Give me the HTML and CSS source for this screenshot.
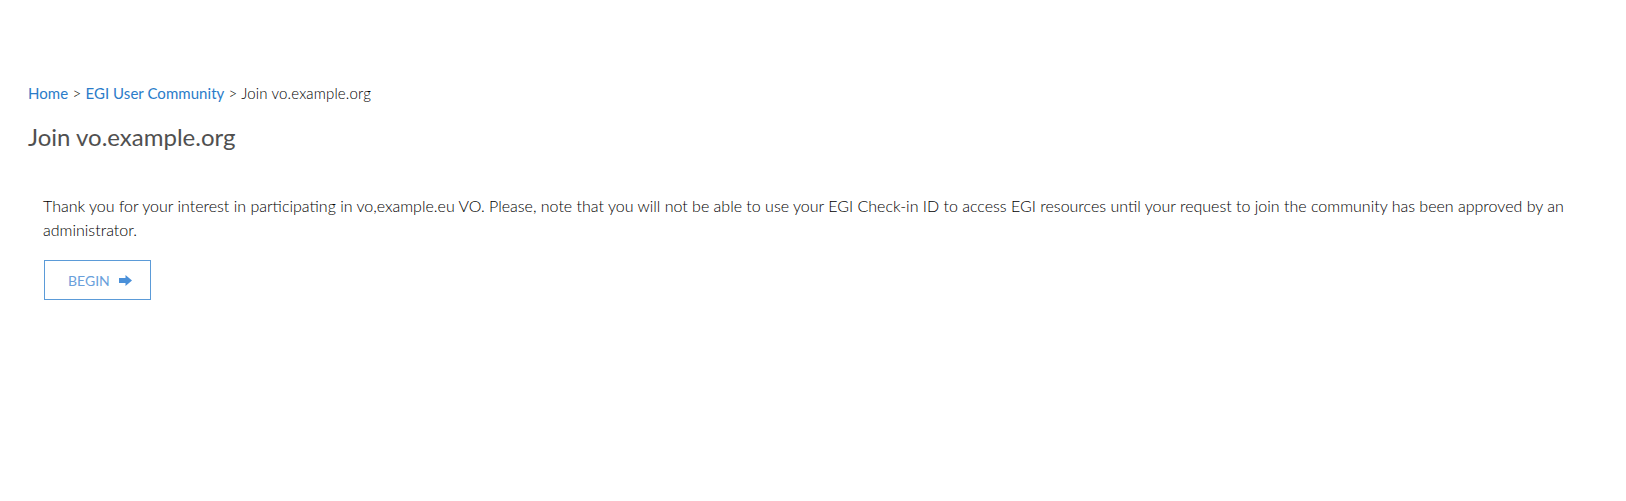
FILE: index.html
```html
<!DOCTYPE html>
<html lang="en">
<head>
<meta charset="utf-8">
<title>Join vo.example.org</title>
<link rel="stylesheet" href="styles.css">
</head>
<body>
<main class="page">
  <nav class="breadcrumb">
    <a href="#">Home</a> &gt; <a href="#">EGI User Community</a> &gt; <span class="current">Join vo.example.org</span>
  </nav>
  <h1 class="title">Join vo.example.org</h1>
  <section class="content">
    <p class="intro">Thank you for your interest in participating in vo,example.eu VO. Please, note that you will not be able to use your EGI Check-in ID to access EGI resources until your request to join the community has been approved by an administrator.</p>
    <button class="begin" type="button">BEGIN <svg class="arrow" width="13" height="11" viewBox="0 0 13 11"><path d="M0 3h6.5V0L13 5.5 6.5 11V8H0z" fill="#4a90d9"/></svg></button>
  </section>
</main>
</body>
</html>
```

FILE: styles.css
```css
html, body {
  margin: 0;
  padding: 0;
  background: #fff;
}
body {
  font-family: Lato, "Open Sans", "Liberation Sans", sans-serif;
  font-size: 16px;
  font-weight: 300;
  color: #111;
}
.page {
  padding: 83px 28px 0 28px;
}
.breadcrumb {
  line-height: 20px;
  color: #000;
  font-size: 15px;
  font-weight: 300;
  letter-spacing: 0.15px;
}
.breadcrumb a {
  color: #2a7cc9;
  font-weight: 400;
  letter-spacing: 0.05px;
  text-decoration: none;
}
.breadcrumb .current {
  color: #000;
}
.title {
  margin: 21px 0 0 0;
  font-size: 24px;
  font-weight: 400;
  line-height: 26px;
  color: #505050;
}
.content {
  padding: 44px 16px 0 15px;
}
.intro {
  margin: 0;
  font-size: 16px;
  line-height: 24px;
  color: #000;
}
.begin {
  margin-top: 18px;
  margin-left: 1px;
  height: 40px;
  padding: 0 18px 0 23px;
  border: 1px solid #5b9bd8;
  background: #fff;
  font-family: inherit;
  font-weight: 400;
  font-size: 14px;
  color: #6a9fdb;
  display: inline-flex;
  align-items: center;
  gap: 9px;
}
.arrow {
  display: block;
}
```
